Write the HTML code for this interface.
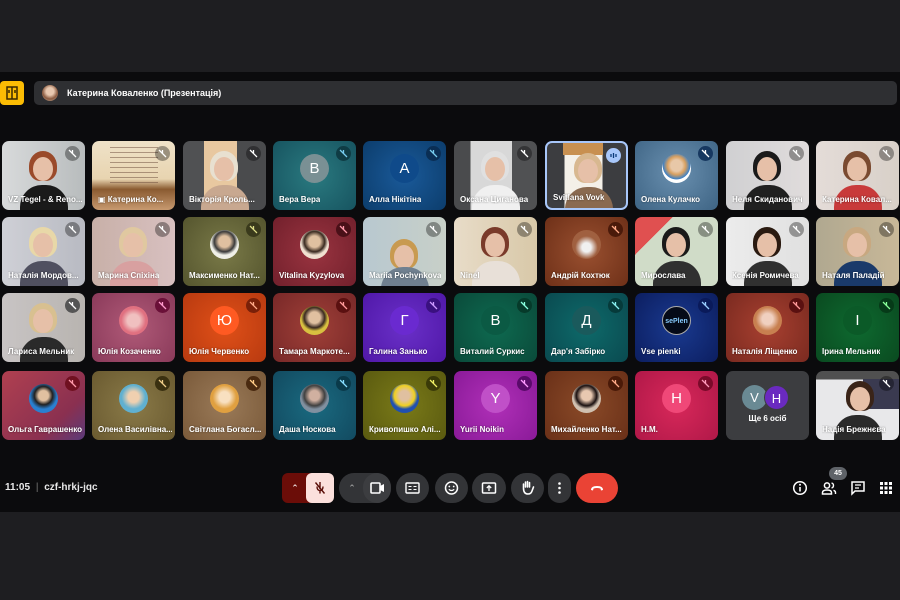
<!DOCTYPE html>
<html><head><meta charset="utf-8"><style>
*{margin:0;padding:0;box-sizing:border-box}
body{width:900px;height:600px;background:#1e1e21;position:relative;overflow:hidden;font-family:"Liberation Sans","DejaVu Sans",sans-serif}
#main{position:absolute;left:0;top:72px;width:900px;height:440px;background:#0b0b0d}
.t{position:absolute;width:83px;height:69px;border-radius:7px;overflow:hidden}
.n{position:absolute;left:6px;bottom:6px;font-size:8px;font-weight:bold;color:#fff;white-space:nowrap;max-width:74px;overflow:hidden;text-shadow:0 0 2px rgba(0,0,0,.5)}
.m{position:absolute;right:5px;top:5px;width:15px;height:15px;border-radius:50%;background:rgba(0,0,0,.35)}
.m svg{position:absolute;left:3px;top:3px}
.av{position:absolute;left:27px;top:13px;width:29px;height:29px;border-radius:50%;color:#fff;font-size:15px;text-align:center;line-height:29px}
.hd{position:absolute;width:20px;height:24px;border-radius:50%;left:31px;top:16px;background:#e6c0a8}
.hr{position:absolute;width:28px;height:30px;border-radius:50% 50% 40% 40%;left:27px;top:10px}
.bd{position:absolute;width:48px;height:30px;border-radius:22px 22px 0 0;left:18px;top:44px}
.ctrl{position:absolute;top:473px;height:30px;border-radius:15px;background:#333437}
.ic{position:absolute;color:#e8e8e8}
</style></head><body>
<div id="main"></div>

<!-- top banner -->
<div style="position:absolute;left:0;top:81px;width:24px;height:24px;background:#fbbc04;border-radius:4px"><svg width="24" height="24" viewBox="0 0 24 24"><path d="M7 6h10v12H7zM12 6v12M9 9v3M15 9v3" stroke="#3a2a00" stroke-width="1.5" fill="none"/></svg></div>
<div style="position:absolute;left:34px;top:81px;width:863px;height:24px;background:#2e2f32;border-radius:5px"></div>
<div style="position:absolute;left:42px;top:85px;width:16px;height:16px;border-radius:50%;background:radial-gradient(circle at 50% 40%,#e8c8b0 30%,#8a5a40 60%,#c0b0a0)"></div>
<div style="position:absolute;left:67px;top:88px;font-size:9px;font-weight:bold;color:#fff">Катерина Коваленко (Презентація)</div>

<!-- ROW 1 -->
<div class="t" style="left:2px;top:141px;background:linear-gradient(90deg,#d8dadb,#b8bcbd)"><div class="hr" style="background:#9a4a2a"></div><div class="hd"></div><div class="bd" style="background:#1a1a1a"></div><div class="m"><svg width="9" height="9"><path d="M1 1l7 7M4.5 1v4" stroke="#fff" stroke-width="1.3"/></svg></div><div class="n">VZ Tegel - & Reno...</div></div>
<div class="t" style="left:92px;top:141px;background:linear-gradient(180deg,#efe2c8 0%,#e8d4b0 55%,#8a5a30 70%,#c89a70 100%)"><div style="position:absolute;left:18px;top:6px;width:48px;height:36px;background:repeating-linear-gradient(180deg,#6a4a3a 0 1px,transparent 1px 5px);opacity:.5"></div><div class="m"><svg width="9" height="9"><path d="M1 1l7 7M4.5 1v4" stroke="#fff" stroke-width="1.3"/></svg></div><div class="n">▣ Катерина Ко...</div></div>
<div class="t" style="left:183px;top:141px;background:linear-gradient(90deg,#505153 0 25%,#e8c8a0 25% 65%,#4a4b4d 65%)"><div class="hr" style="background:#e8e0d0"></div><div class="hd"></div><div class="bd" style="background:#c8a890"></div><div class="m"><svg width="9" height="9"><path d="M1 1l7 7M4.5 1v4" stroke="#fff" stroke-width="1.3"/></svg></div><div class="n">Вікторія Кроль...</div></div>
<div class="t" style="left:273px;top:141px;background:radial-gradient(circle at 50% 50%,#2a7a80,#175460)"><div class="av" style="background:#7a9094">В</div><div class="m" style="background:#0f3c44"><svg width="9" height="9"><path d="M1 1l7 7M4.5 1v4" stroke="#7ce" stroke-width="1.3"/></svg></div><div class="n">Вера Вера</div></div>
<div class="t" style="left:363px;top:141px;background:radial-gradient(circle at 50% 50%,#1a5a9a,#0c3d6c)"><div class="av" style="background:#0f4a8a">А</div><div class="m" style="background:#0a2e54"><svg width="9" height="9"><path d="M1 1l7 7M4.5 1v4" stroke="#7ce" stroke-width="1.3"/></svg></div><div class="n">Алла Нікітіна</div></div>
<div class="t" style="left:454px;top:141px;background:linear-gradient(90deg,#4a4b4d 0 20%,#d8d8d8 20% 70%,#505153 70%)"><div class="hr" style="background:#e0e0e0"></div><div class="hd"></div><div class="bd" style="background:#f0f0f0"></div><div class="m"><svg width="9" height="9"><path d="M1 1l7 7M4.5 1v4" stroke="#fff" stroke-width="1.3"/></svg></div><div class="n">Оксана Циганова</div></div>
<div class="t" style="left:545px;top:141px;background:linear-gradient(90deg,#3c3d40 0 22%,#f4f0e8 22% 70%,#3c3d40 70%);border:2px solid #a8c7fa"><div style="position:absolute;left:16px;top:0;width:40px;height:12px;background:#c89050"></div><div class="hr" style="background:#d8b890"></div><div class="hd"></div><div class="bd" style="background:#8a6a50"></div><div class="m" style="background:#a8c7fa"><svg width="9" height="9"><path d="M2 3v3M4.5 2v5M7 3v3" stroke="#0b3a7a" stroke-width="1.3"/></svg></div><div class="n">Svitlana Vovk</div></div>
<div class="t" style="left:635px;top:141px;background:radial-gradient(circle at 50% 45%,#6a90b0,#3e6484)"><div class="av" style="background:radial-gradient(circle at 50% 40%,#e8c8a8 25%,#d8a060 40%,#3a80c8 60%,#fff 62%)"></div><div class="m" style="background:#173860"><svg width="9" height="9"><path d="M1 1l7 7M4.5 1v4" stroke="#fff" stroke-width="1.3"/></svg></div><div class="n">Олена Кулачко</div></div>
<div class="t" style="left:726px;top:141px;background:linear-gradient(90deg,#d0d0d2,#e0dcdc)"><div class="hr" style="background:#1a1a1a"></div><div class="hd"></div><div class="bd" style="background:#202020"></div><div class="m"><svg width="9" height="9"><path d="M1 1l7 7M4.5 1v4" stroke="#fff" stroke-width="1.3"/></svg></div><div class="n">Неля Скиданович</div></div>
<div class="t" style="left:816px;top:141px;background:linear-gradient(90deg,#e4dcd8,#d8d0c8)"><div class="hr" style="background:#7a4a30"></div><div class="hd"></div><div class="bd" style="background:#c83a3a"></div><div class="m"><svg width="9" height="9"><path d="M1 1l7 7M4.5 1v4" stroke="#fff" stroke-width="1.3"/></svg></div><div class="n">Катерина Ковал...</div></div>

<!-- ROW 2 -->
<div class="t" style="left:2px;top:217px;background:linear-gradient(90deg,#cfd0d6,#b8bac2)"><div class="hr" style="background:#e8d8a8"></div><div class="hd"></div><div class="bd" style="background:#505060"></div><div class="m"><svg width="9" height="9"><path d="M1 1l7 7M4.5 1v4" stroke="#fff" stroke-width="1.3"/></svg></div><div class="n">Наталія Мордов...</div></div>
<div class="t" style="left:92px;top:217px;background:linear-gradient(90deg,#c8b0a8,#d8c0c0)"><div class="hr" style="background:#e0c8a0"></div><div class="hd"></div><div class="bd" style="background:#d8a0a0"></div><div class="m"><svg width="9" height="9"><path d="M1 1l7 7M4.5 1v4" stroke="#fff" stroke-width="1.3"/></svg></div><div class="n">Марина Спіхіна</div></div>
<div class="t" style="left:183px;top:217px;background:radial-gradient(circle,#7a7a48,#55552e)"><div class="av" style="background:radial-gradient(circle at 50% 40%,#e0c0a0 25%,#3a3a3a 45%,#f0f0e8 60%)"></div><div class="m" style="background:#3a3a1c"><svg width="9" height="9"><path d="M1 1l7 7M4.5 1v4" stroke="#dd8" stroke-width="1.3"/></svg></div><div class="n">Максименко Нат...</div></div>
<div class="t" style="left:273px;top:217px;background:radial-gradient(circle,#9a3440,#72202c)"><div class="av" style="background:radial-gradient(circle at 50% 40%,#e0c0a0 25%,#3a2a20 45%,#f0e0d0 60%)"></div><div class="m" style="background:#4a1018"><svg width="9" height="9"><path d="M1 1l7 7M4.5 1v4" stroke="#f9a" stroke-width="1.3"/></svg></div><div class="n">Vitalina Kyzylova</div></div>
<div class="t" style="left:363px;top:217px;background:linear-gradient(90deg,#b8c8d0,#c8d0c8)"><div class="hr" style="background:#c89a50;top:22px"></div><div class="hd" style="top:28px"></div><div class="bd" style="background:#708090;top:50px"></div><div class="m"><svg width="9" height="9"><path d="M1 1l7 7M4.5 1v4" stroke="#fff" stroke-width="1.3"/></svg></div><div class="n">Mariia Pochynkova</div></div>
<div class="t" style="left:454px;top:217px;background:linear-gradient(90deg,#e8dcc8,#d8c8a8)"><div class="hr" style="background:#7a3a2a"></div><div class="hd"></div><div class="bd" style="background:#e8e0d8"></div><div class="m"><svg width="9" height="9"><path d="M1 1l7 7M4.5 1v4" stroke="#fff" stroke-width="1.3"/></svg></div><div class="n">Ninel</div></div>
<div class="t" style="left:545px;top:217px;background:radial-gradient(circle,#9a5030,#6e3018)"><div class="av" style="background:radial-gradient(circle at 50% 60%,#f0f0f0 20%,#a06040 50%)"></div><div class="m" style="background:#4a1a0a"><svg width="9" height="9"><path d="M1 1l7 7M4.5 1v4" stroke="#fa8" stroke-width="1.3"/></svg></div><div class="n">Андрій Кохтюк</div></div>
<div class="t" style="left:635px;top:217px;background:linear-gradient(135deg,#e05050 0 25%,#d0dcc8 25%)"><div class="hr" style="background:#1a1a1a"></div><div class="hd"></div><div class="bd" style="background:#303030"></div><div class="m"><svg width="9" height="9"><path d="M1 1l7 7M4.5 1v4" stroke="#fff" stroke-width="1.3"/></svg></div><div class="n">Мирослава</div></div>
<div class="t" style="left:726px;top:217px;background:linear-gradient(90deg,#ececec,#e0e0e0)"><div class="hr" style="background:#2a1a10"></div><div class="hd"></div><div class="bd" style="background:#303030"></div><div class="m"><svg width="9" height="9"><path d="M1 1l7 7M4.5 1v4" stroke="#fff" stroke-width="1.3"/></svg></div><div class="n">Ксенія Ромичева</div></div>
<div class="t" style="left:816px;top:217px;background:linear-gradient(90deg,#b0a890,#c8b898)"><div class="hr" style="background:#c8a880"></div><div class="hd"></div><div class="bd" style="background:#1a3a6a"></div><div class="m"><svg width="9" height="9"><path d="M1 1l7 7M4.5 1v4" stroke="#fff" stroke-width="1.3"/></svg></div><div class="n">Наталя Паладій</div></div>

<!-- ROW 3 -->
<div class="t" style="left:2px;top:293px;background:linear-gradient(90deg,#c8c4c4,#b8b4b0)"><div class="hr" style="background:#d8c090"></div><div class="hd"></div><div class="bd" style="background:#2a2a2a"></div><div class="m" style="background:#555"><svg width="9" height="9"><path d="M1 1l7 7M4.5 1v4" stroke="#fff" stroke-width="1.3"/></svg></div><div class="n">Лариса Мельник</div></div>
<div class="t" style="left:92px;top:293px;background:radial-gradient(circle,#b05a78,#8a3a5a)"><div class="av" style="background:radial-gradient(circle at 50% 50%,#f0c0c0 30%,#e07080 60%)"></div><div class="m" style="background:#6a1038"><svg width="9" height="9"><path d="M1 1l7 7M4.5 1v4" stroke="#f9c" stroke-width="1.3"/></svg></div><div class="n">Юлія Козаченко</div></div>
<div class="t" style="left:183px;top:293px;background:radial-gradient(circle,#e05018,#b83a10)"><div class="av" style="background:#ff5a22">Ю</div><div class="m" style="background:#7a2008"><svg width="9" height="9"><path d="M1 1l7 7M4.5 1v4" stroke="#fa8" stroke-width="1.3"/></svg></div><div class="n">Юлія Червенко</div></div>
<div class="t" style="left:273px;top:293px;background:radial-gradient(circle,#a04038,#782828)"><div class="av" style="background:radial-gradient(circle at 50% 40%,#e0c0a0 25%,#3a2a20 45%,#d8c040 60%)"></div><div class="m" style="background:#5a1010"><svg width="9" height="9"><path d="M1 1l7 7M4.5 1v4" stroke="#f99" stroke-width="1.3"/></svg></div><div class="n">Тамара Маркоте...</div></div>
<div class="t" style="left:363px;top:293px;background:radial-gradient(circle,#6a30c8,#5018a8)"><div class="av" style="background:#6a2ad0">Г</div><div class="m" style="background:#3a1080"><svg width="9" height="9"><path d="M1 1l7 7M4.5 1v4" stroke="#c9f" stroke-width="1.3"/></svg></div><div class="n">Галина Занько</div></div>
<div class="t" style="left:454px;top:293px;background:radial-gradient(circle,#0e6a50,#0a4a3a)"><div class="av" style="background:#0b5a44">В</div><div class="m" style="background:#063a2a"><svg width="9" height="9"><path d="M1 1l7 7M4.5 1v4" stroke="#8fd" stroke-width="1.3"/></svg></div><div class="n">Виталий Суркис</div></div>
<div class="t" style="left:545px;top:293px;background:radial-gradient(circle,#0e6a6a,#0a4a50)"><div class="av" style="background:#1a5a5c">Д</div><div class="m" style="background:#063a3a"><svg width="9" height="9"><path d="M1 1l7 7M4.5 1v4" stroke="#8ee" stroke-width="1.3"/></svg></div><div class="n">Дар'я Забірко</div></div>
<div class="t" style="left:635px;top:293px;background:radial-gradient(circle,#1a3a90,#0c1e60)"><div class="av" style="background:#050a18;border:1px solid #aaa;font-size:7px;color:#8cf;font-weight:bold">sePlen</div><div class="m" style="background:#0a1a5a"><svg width="9" height="9"><path d="M1 1l7 7M4.5 1v4" stroke="#9cf" stroke-width="1.3"/></svg></div><div class="n">Vse pienki</div></div>
<div class="t" style="left:726px;top:293px;background:radial-gradient(circle,#a84030,#7a2a20)"><div class="av" style="background:radial-gradient(circle at 50% 45%,#f0d0c0 25%,#c88050 55%)"></div><div class="m" style="background:#5a1010"><svg width="9" height="9"><path d="M1 1l7 7M4.5 1v4" stroke="#f99" stroke-width="1.3"/></svg></div><div class="n">Наталія Ліщенко</div></div>
<div class="t" style="left:816px;top:293px;background:radial-gradient(circle,#0e6a30,#0a4a20)"><div class="av" style="background:#0b5a28">І</div><div class="m" style="background:#063a18"><svg width="9" height="9"><path d="M1 1l7 7M4.5 1v4" stroke="#8f9" stroke-width="1.3"/></svg></div><div class="n">Ірина Мельник</div></div>

<!-- ROW 4 -->
<div class="t" style="left:2px;top:371px;background:linear-gradient(135deg,#b04050,#8a3050 70%,#5a3a7a)"><div class="av" style="background:radial-gradient(circle at 50% 40%,#e0c0a0 22%,#202020 40%,#2a80d0 60%)"></div><div class="m" style="background:#701020"><svg width="9" height="9"><path d="M1 1l7 7M4.5 1v4" stroke="#f9a" stroke-width="1.3"/></svg></div><div class="n">Ольга Гаврашенко</div></div>
<div class="t" style="left:92px;top:371px;background:radial-gradient(circle,#8a7a48,#6a5a30)"><div class="av" style="background:radial-gradient(circle at 50% 45%,#f0d0b0 25%,#60b0d0 55%)"></div><div class="m" style="background:#3a3010"><svg width="9" height="9"><path d="M1 1l7 7M4.5 1v4" stroke="#ec8" stroke-width="1.3"/></svg></div><div class="n">Олена Василівна...</div></div>
<div class="t" style="left:183px;top:371px;background:radial-gradient(circle,#9a7a58,#7a5a3a)"><div class="av" style="background:radial-gradient(circle at 50% 45%,#f8e0c0 25%,#e0a040 55%)"></div><div class="m" style="background:#4a2a10"><svg width="9" height="9"><path d="M1 1l7 7M4.5 1v4" stroke="#fc8" stroke-width="1.3"/></svg></div><div class="n">Світлана Богасл...</div></div>
<div class="t" style="left:273px;top:371px;background:radial-gradient(circle,#1a6a80,#124a60)"><div class="av" style="background:radial-gradient(circle at 50% 40%,#d0b0a0 22%,#404040 45%,#8090a0 60%)"></div><div class="m" style="background:#0a3a4a"><svg width="9" height="9"><path d="M1 1l7 7M4.5 1v4" stroke="#8df" stroke-width="1.3"/></svg></div><div class="n">Даша Носкова</div></div>
<div class="t" style="left:363px;top:371px;background:radial-gradient(circle,#7a7a18,#5a5a10)"><div class="av" style="background:radial-gradient(circle at 50% 40%,#e0c0a0 22%,#f0d020 45%,#2050b0 60%)"></div><div class="m" style="background:#3a3a08"><svg width="9" height="9"><path d="M1 1l7 7M4.5 1v4" stroke="#ee6" stroke-width="1.3"/></svg></div><div class="n">Кривопишко Алі...</div></div>
<div class="t" style="left:454px;top:371px;background:radial-gradient(circle,#b030b8,#8a1a98)"><div class="av" style="background:#c050c8">Y</div><div class="m" style="background:#5a0a6a"><svg width="9" height="9"><path d="M1 1l7 7M4.5 1v4" stroke="#f9f" stroke-width="1.3"/></svg></div><div class="n">Yurii Noikin</div></div>
<div class="t" style="left:545px;top:371px;background:radial-gradient(circle,#8a4a28,#6a3018)"><div class="av" style="background:radial-gradient(circle at 50% 40%,#e8c8b0 22%,#1a1010 45%,#d0c0b0 60%)"></div><div class="m" style="background:#4a1a08"><svg width="9" height="9"><path d="M1 1l7 7M4.5 1v4" stroke="#fa8" stroke-width="1.3"/></svg></div><div class="n">Михайленко Нат...</div></div>
<div class="t" style="left:635px;top:371px;background:radial-gradient(circle,#d8285a,#b01848)"><div class="av" style="background:#f04878">Н</div><div class="m" style="background:#7a0a2a"><svg width="9" height="9"><path d="M1 1l7 7M4.5 1v4" stroke="#f9b" stroke-width="1.3"/></svg></div><div class="n">Н.М.</div></div>
<div class="t" style="left:726px;top:371px;background:#3c3d40"><div class="av" style="left:16px;top:14px;width:25px;height:25px;line-height:25px;font-size:13px;background:#6a8a94">V</div><div class="av" style="left:38px;top:14px;width:25px;height:25px;line-height:25px;font-size:13px;background:#6a2ac0;border:1px solid #3c3d40">Н</div><div style="position:absolute;left:0;width:83px;top:43px;text-align:center;font-size:8px;font-weight:bold;color:#fff">Ще 6 осіб</div></div>
<div class="t" style="left:816px;top:371px;background:linear-gradient(180deg,#505050 0 12%,#e8e8ea 12%)"><div style="position:absolute;right:0;top:8px;width:36px;height:30px;background:#3a3a50"></div><div class="hr" style="background:#3a2418;left:30px"></div><div class="hd" style="left:34px"></div><div class="bd" style="background:#2a2a2a"></div><div class="m"><svg width="9" height="9"><path d="M1 1l7 7M4.5 1v4" stroke="#fff" stroke-width="1.3"/></svg></div><div class="n">Надія Брежнєва</div></div>

<!-- bottom bar -->
<div style="position:absolute;left:5px;top:482px;font-size:10px;font-weight:bold;color:#e8e8e8">11:05 <span style="color:#777;font-weight:normal;margin:0 3px">|</span> czf-hrkj-jqc</div>

<div class="ctrl" style="left:282px;width:52px;background:#6b0d08;border-radius:6px 15px 15px 6px"></div>
<div style="position:absolute;left:282px;top:473px;width:26px;height:30px;color:#fff;font-size:9px;text-align:center;line-height:30px">⌃</div>
<div style="position:absolute;left:306px;top:473px;width:28px;height:30px;border-radius:6px;background:#fbe0dc"><svg width="28" height="30" viewBox="0 0 28 30"><path d="M14 9v7M11 13.5q0 4 3 4t3-4M14 17.5v3M9.5 9.5l9 11" stroke="#5a0e08" stroke-width="1.4" fill="none"/></svg></div>

<div class="ctrl" style="left:339px;width:52px"></div>
<div style="position:absolute;left:339px;top:473px;width:26px;height:30px;color:#aaa;font-size:9px;text-align:center;line-height:30px">⌃</div>
<div style="position:absolute;left:363px;top:473px;width:28px;height:30px;border-radius:15px;background:#3c3d40"><svg width="28" height="30" viewBox="0 0 28 30"><rect x="8" y="10" width="9" height="10" rx="1" fill="none" stroke="#fff" stroke-width="1.6"/><path d="M17 13l4-2v8l-4-2z" fill="#fff"/></svg></div>

<div class="ctrl" style="left:396px;width:33px"><svg width="33" height="30" viewBox="0 0 33 30"><rect x="10" y="10" width="13" height="10" rx="1" fill="none" stroke="#fff" stroke-width="1.4"/><path d="M12.5 13.5h3M17.5 13.5h3M12.5 16.5h3M17.5 16.5h3" stroke="#fff" stroke-width="1"/></svg></div>
<div class="ctrl" style="left:435px;width:33px"><svg width="33" height="30" viewBox="0 0 33 30"><circle cx="16.5" cy="15" r="6" fill="none" stroke="#fff" stroke-width="1.5"/><circle cx="14.3" cy="13.5" r="0.9" fill="#fff"/><circle cx="18.7" cy="13.5" r="0.9" fill="#fff"/><path d="M13.8 16.3q2.7 2.5 5.4 0" stroke="#fff" stroke-width="1.2" fill="none"/></svg></div>
<div class="ctrl" style="left:472px;width:34px"><svg width="34" height="30" viewBox="0 0 34 30"><rect x="10.5" y="10" width="13" height="10" rx="1" fill="none" stroke="#fff" stroke-width="1.5"/><path d="M17 18v-5M14.8 15l2.2-2.2 2.2 2.2" stroke="#fff" stroke-width="1.3" fill="none"/></svg></div>
<div class="ctrl" style="left:511px;width:33px"><svg width="33" height="30" viewBox="0 0 33 30"><path d="M12.5 15v-4M14.5 14v-5M16.5 14v-5.5M18.5 14v-4.5M12.5 15q0 6 4.5 6q3 0 4-3l1.5-4" stroke="#fff" stroke-width="1.6" fill="none" stroke-linecap="round"/></svg></div>
<div class="ctrl" style="left:548px;width:23px"><svg width="23" height="30" viewBox="0 0 23 30"><circle cx="11.5" cy="10.5" r="1.3" fill="#fff"/><circle cx="11.5" cy="15" r="1.3" fill="#fff"/><circle cx="11.5" cy="19.5" r="1.3" fill="#fff"/></svg></div>
<div class="ctrl" style="left:576px;width:42px;background:#ea4335"><svg width="42" height="30" viewBox="0 0 42 30"><path d="M15 17q0-4 6-4t6 4l-2 0.5-0.5-2q-3.5-1-7 0l-0.5 2z" fill="#fff"/></svg></div>

<svg class="ic" style="left:792px;top:480px" width="16" height="16" viewBox="0 0 16 16"><circle cx="8" cy="8" r="6.3" fill="none" stroke="#fff" stroke-width="1.5"/><path d="M8 7v4.5" stroke="#fff" stroke-width="1.6"/><circle cx="8" cy="4.8" r="1" fill="#fff"/></svg>
<div style="position:absolute;left:829px;top:467px;width:18px;height:13px;border-radius:7px;background:#5f6368;color:#fff;font-size:7px;font-weight:bold;text-align:center;line-height:13px">45</div>
<svg class="ic" style="left:821px;top:480px" width="16" height="16" viewBox="0 0 16 16"><circle cx="6" cy="5.5" r="2.6" fill="none" stroke="#fff" stroke-width="1.5"/><path d="M1.5 14v-1.5q0-2.5 4.5-2.5t4.5 2.5V14z" fill="none" stroke="#fff" stroke-width="1.5"/><path d="M10.5 3q2 .5 2 2.5t-2 2.5M12.5 10.3q2 .7 2 2.2V14" fill="none" stroke="#fff" stroke-width="1.4"/></svg>
<svg class="ic" style="left:850px;top:480px" width="16" height="16" viewBox="0 0 16 16"><path d="M2 2h12v9H5l-3 3z" fill="none" stroke="#fff" stroke-width="1.5"/><path d="M5 5h6M5 8h4" stroke="#fff" stroke-width="1.3"/></svg>
<svg class="ic" style="left:879px;top:481px" width="14" height="14" viewBox="0 0 14 14"><g fill="#fff"><rect x="1" y="1" width="3" height="3"/><rect x="5.5" y="1" width="3" height="3"/><rect x="10" y="1" width="3" height="3"/><rect x="1" y="5.5" width="3" height="3"/><rect x="5.5" y="5.5" width="3" height="3"/><rect x="10" y="5.5" width="3" height="3"/><rect x="1" y="10" width="3" height="3"/><rect x="5.5" y="10" width="3" height="3"/><rect x="10" y="10" width="3" height="3"/></g></svg>
</body></html>
